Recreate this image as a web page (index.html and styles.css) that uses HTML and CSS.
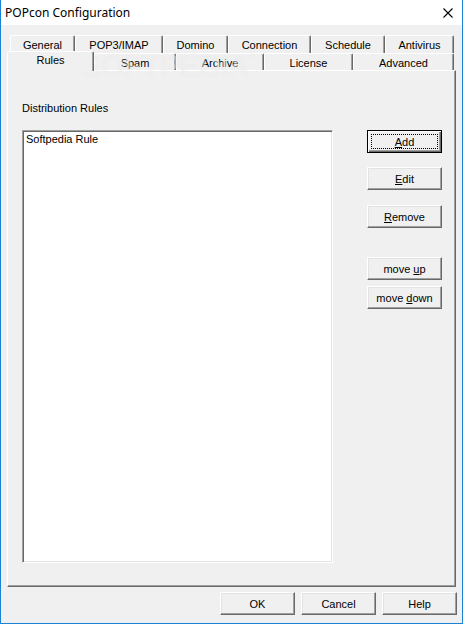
FILE: index.html
```html
<!DOCTYPE html>
<html lang="en">
<head>
    <meta charset="UTF-8">
    <title>POPcon Configuration</title>
    <link rel="stylesheet" href="styles.css">
</head>
<body>
<div class="window">
    <div class="titlebar">
        <span class="title">POPcon Configuration</span>
        <svg class="close" width="10" height="10" viewBox="0 0 10 10">
            <path d="M0.5 0.5 L9.5 9.5 M9.5 0.5 L0.5 9.5" stroke="#000" stroke-width="1.1" fill="none"/>
        </svg>
    </div>

    <div class="client">
        <!-- tab strip, two rows -->
        <div class="tab-row back">
            <div class="tab w-general">General</div>
            <div class="tab w-pop">POP3/IMAP</div>
            <div class="tab w-domino">Domino</div>
            <div class="tab w-connection">Connection</div>
            <div class="tab w-schedule">Schedule</div>
            <div class="tab w-antivirus">Antivirus</div>
        </div>
        <div class="tab-row front">
            <div class="tab selected w-rules">Rules</div>
            <div class="tab w-spam">Spam</div>
            <div class="tab w-archive">Archive</div>
            <div class="tab w-license">License</div>
            <div class="tab w-advanced">Advanced</div>
        </div>

        <div class="panel">
            <div class="group-label">Distribution Rules</div>
            <div class="rules-body">
                <div class="listbox">
                    <div class="list-item">Softpedia Rule</div>
                </div>
                <div class="side-buttons">
                    <button class="btn default"><u>A</u>dd</button>
                    <button class="btn edit"><u>E</u>dit</button>
                    <button class="btn remove"><u>R</u>emove</button>
                    <button class="btn up">move <u>u</u>p</button>
                    <button class="btn down">move <u>d</u>own</button>
                </div>
            </div>
        </div>

        <div class="dialog-buttons">
            <button class="btn">OK</button>
            <button class="btn">Cancel</button>
            <button class="btn">Help</button>
        </div>
    </div>

    <div class="watermark">SOFTPEDIA<sup>®</sup></div>
</div>
</body>
</html>
```

FILE: styles.css
```css
/* general */
body {
    margin: 0;
    padding: 0;
    background-color: #f0f0f0;
    font-family: "Liberation Sans", Arial, sans-serif;
    font-size: 11px;
    color: #000;
}
.window {
    position: relative;
    width: 463px;
    height: 624px;
    box-sizing: border-box;
    border: 1px solid #1883d7;
    border-top: none;
    background-color: #f0f0f0;
    overflow: hidden;
}
.titlebar {
    height: 25px;
    background-color: #fff;
    display: flex;
    align-items: center;
    justify-content: space-between;
    padding-left: 4px;
    padding-right: 9px;
}
.title {
    font-family: "Noto Sans", "Open Sans", sans-serif;
    font-size: 12px;
    margin-top: -1px;
}
.close { display: block; margin-top: 1px; }

.client {
    padding-top: 10px;
}

/* tabs */
.tab-row {
    display: flex;
    height: 18px;
}
.tab-row.back { margin-left: 9px; }
.tab-row.front {
    margin-left: 6px;
    height: 17px;
    align-items: flex-end;
}
.tab {
    box-sizing: border-box;
    height: 18px;
    border-top: 1px solid #fff;
    border-left: 1px solid #fff;
    border-right: 1px solid #696969;
    border-radius: 2px 2px 0 0;
    box-shadow: inset -1px 0 #a0a0a0;
    background-color: #f0f0f0;
    text-align: center;
    line-height: 16px;
    padding-top: 1px;
}
.front .tab {
    height: 17px;
    line-height: 16px;
    padding-top: 1px;
}
.front .tab.selected {
    position: relative;
    z-index: 2;
    height: 20px;
    margin-bottom: -1px;
    padding-top: 0;
    line-height: 17px;
}
.w-general { width: 65px; }
.w-pop { width: 88px; }
.w-domino { width: 65px; }
.w-connection { width: 83px; }
.w-schedule { width: 74px; }
.w-antivirus { width: 69px; }
.w-rules { width: 87px; }
.w-spam { width: 82px; }
.w-archive { width: 88px; }
.w-license { width: 89px; }
.w-advanced { width: 101px; }

/* tab page */
.panel {
    box-sizing: border-box;
    margin-left: 6px;
    width: 449px;
    height: 517px;
    border: 1px solid;
    border-color: #fff #696969 #696969 #fff;
    box-shadow: inset -1px -1px #a0a0a0;
    padding: 31px 0 0 14px;
}
.group-label {
    line-height: 13px;
}
.rules-body {
    display: flex;
    margin-top: 15px;
}
.listbox {
    box-sizing: border-box;
    width: 311px;
    height: 433px;
    background-color: #fff;
    border: 1px solid;
    border-color: #a0a0a0 #fff #fff #a0a0a0;
    box-shadow: inset 1px 1px #696969, inset -1px -1px #e3e3e3;
    padding: 2px 3px;
}
.list-item { line-height: 13px; }

.side-buttons {
    display: flex;
    flex-direction: column;
    margin-left: 34px;
}
.side-buttons .edit { margin-top: 14px; }
.side-buttons .remove { margin-top: 15px; }
.side-buttons .up { margin-top: 29px; }
.side-buttons .down { margin-top: 6px; }

/* buttons */
.btn {
    box-sizing: border-box;
    width: 75px;
    height: 23px;
    padding: 0;
    margin: 0;
    font-family: "Liberation Sans", Arial, sans-serif;
    font-size: 11px;
    color: #000;
    background-color: #f0f0f0;
    border: 1px solid;
    border-color: #fff #696969 #696969 #fff;
    box-shadow: inset -1px -1px #a0a0a0, inset 1px 1px #e3e3e3;
}
.btn.default {
    position: relative;
    border-color: #000;
    box-shadow: inset 1px 1px #fff, inset -1px -1px #696969, inset -2px -2px #a0a0a0;
}
.btn.default::after {
    content: "";
    position: absolute;
    left: 3px;
    top: 3px;
    right: 3px;
    bottom: 3px;
    border: 1px dotted #000;
}
.dialog-buttons {
    display: flex;
    justify-content: flex-end;
    gap: 6px;
    margin-top: 5px;
    padding-right: 5px;
}

.watermark {
    position: absolute;
    left: 80px;
    top: 49px;
    font-family: "Liberation Sans", Arial, sans-serif;
    font-weight: bold;
    font-size: 31px;
    letter-spacing: -1px;
    color: rgba(255, 255, 255, 0.45);
    text-shadow: 0 0 1px rgba(0, 0, 0, 0.06);
    pointer-events: none;
}
.watermark sup { font-size: 10px; vertical-align: top; }
```
